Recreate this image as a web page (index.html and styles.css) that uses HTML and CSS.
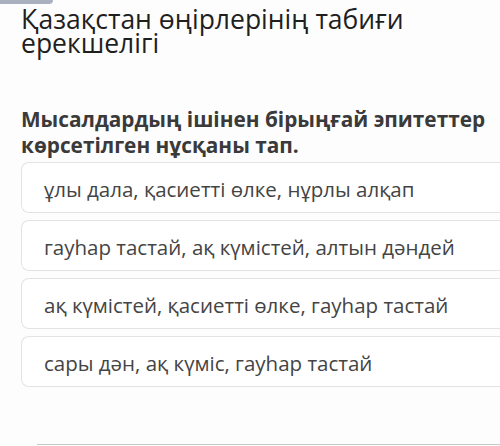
FILE: index.html
```html
<!DOCTYPE html>
<html lang="kk">
<head>
    <meta charset="UTF-8">
    <title>Қазақстан өңірлерінің табиғи ерекшелігі</title>
    <link rel="stylesheet" href="styles.css">
</head>
<body>

<div class="tab"></div>

<div class="page">
    <h1 class="title">Қазақстан өңірлерінің табиғи ерекшелігі</h1>

    <p class="question">Мысалдардың ішінен бірыңғай эпитеттер көрсетілген нұсқаны тап.</p>

    <div class="answers">
        <div class="answer">ұлы дала, қасиетті өлке, нұрлы алқап</div>
        <div class="answer">гауһар тастай, ақ күмістей, алтын дәндей</div>
        <div class="answer">ақ күмістей, қасиетті өлке, гауһар тастай</div>
        <div class="answer">сары дән, ақ күміс, гауһар тастай</div>
    </div>

    <div class="footer-line"></div>
</div>

</body>
</html>
```

FILE: styles.css
```css
body {
    margin: 0;
    background: #fdfdfd;
    font-family: "Open Sans", Arial, sans-serif;
    color: #222;
}

.tab {
    width: 53px;
    height: 4px;
    background: #a9b1c0;
    border-bottom-right-radius: 4px;
}

.page {
    padding-left: 21px;
}

.title {
    margin: 3px 0 0;
    width: 420px;
    font-size: 26.5px;
    font-weight: 400;
    line-height: 24px;
    color: #1f1f1f;
}

.question {
    margin: 51px 0 0;
    width: 479px;
    font-size: 20.8px;
    font-weight: 700;
    line-height: 26px;
    color: #3a3a3a;
}

.answers {
    display: flex;
    flex-direction: column;
    gap: 7px;
    margin-top: 4px;
}

/* the cards run off the right side, so no right border */
.answer {
    height: 51px;
    box-sizing: border-box;
    display: flex;
    align-items: center;
    padding: 2px 0 0 22px;
    border: 1px solid #e3e3e3;
    border-right: none;
    border-radius: 8px 0 0 8px;
    background: #fff;
    font-size: 20.5px;
    color: #444;
    white-space: nowrap;
}

.footer-line {
    margin: 57px 0 0 16px;
    height: 1px;
    background: #c9c9c9;
}
```
